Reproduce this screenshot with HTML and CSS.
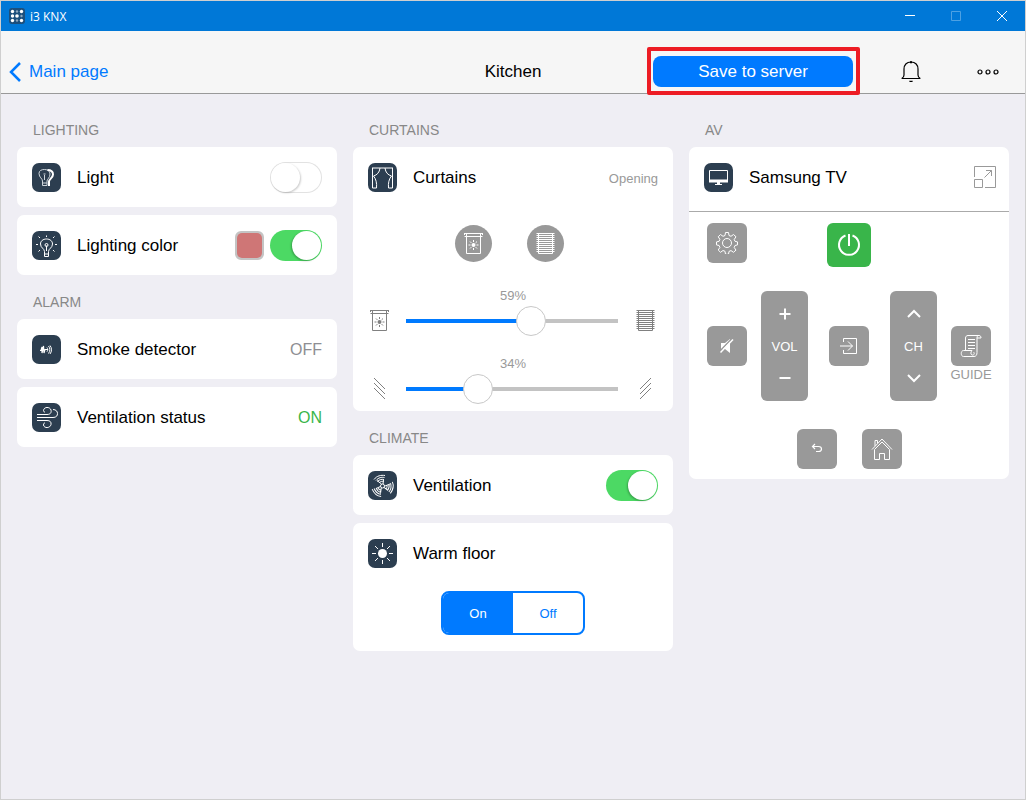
FILE: index.html
```html
<!DOCTYPE html>
<html lang="en">

<head>
    <meta charset="UTF-8">
    <meta name="viewport" content="width=device-width, initial-scale=1.0">
    <title>i3 KNX</title>
    <link rel="stylesheet" href="styles.css">
</head>

<body>
    <!-- shared icons -->
    <svg class="sprite" aria-hidden="true">
        <symbol id="icon-screen" viewBox="0 0 19 21">
            <path d="M.5.500h18M.5 3.500h18M2.500 0v20.500h14V0M.5 0v2M18.500 0v2" />
            <circle cx="9.500" cy="12" r="2" fill="currentColor" stroke="none" />
            <path d="M9.500 7v2M9.500 15v2M4.500 12h2M12.500 12h2M6 8.500l1.400 1.400M11.600 14.100l1.400 1.400M13 8.500l-1.400 1.400M7.400 14.100L6 15.500" />
        </symbol>
        <symbol id="icon-blinds" viewBox="0 0 19 21">
            <path d="M.5.500h18M2.500 0v20.500h14V0M.5 2.500h18M.5 4.500h18M.5 6.500h18M.5 8.500h18M.5 10.500h18M.5 12.500h18M.5 14.500h18M.5 16.500h18M.5 18.500h18" />
        </symbol>
    </svg>

    <div id="titlebar">
        <svg class="app-icon" viewBox="0 0 16 16">
            <rect width="16" height="16" rx="3" fill="#1c4f7c" />
            <g fill="#fff">
                <circle cx="3.500" cy="3.500" r="1.700" />
                <circle cx="8" cy="3.500" r="1.200" opacity="0.5" />
                <circle cx="12.500" cy="3.500" r="1.700" />
                <circle cx="3.500" cy="8" r="1.700" />
                <circle cx="8" cy="8" r="1.800" />
                <circle cx="12.500" cy="8" r="1.200" opacity="0.5" />
                <circle cx="3.500" cy="12.500" r="1.700" />
                <circle cx="8" cy="12.500" r="1.200" opacity="0.5" />
                <circle cx="12.500" cy="12.500" r="1.700" />
            </g>
        </svg>
        <span class="app-name">i3 KNX</span>
        <button aria-label="Minimize"><svg viewBox="0 0 10 10"><path d="M0 4.500h10" /></svg></button>
        <button aria-label="Maximize" disabled><svg viewBox="0 0 10 10"><path d="M.5.500h9v9h-9z" /></svg></button>
        <button aria-label="Close"><svg viewBox="0 0 10 10"><path d="M0 0l10 10M10 0L0 10" /></svg></button>
    </div>

    <header>
        <a class="back" href="#">
            <svg viewBox="0 0 12 20"><path d="M11 1L2 10l9 9" /></svg>
            Main page
        </a>
        <h1>Kitchen</h1>
        <div class="actions">
            <button class="save">Save to server</button>
            <button class="header-button" aria-label="Notifications">
                <svg viewBox="0 0 20 22"><path d="M10 1C5.500 1 3 4 3 8v6c0 2-1.200 3-2.300 3.500h18.600C18.200 17 17 16 17 14V8c0-4-2.500-7-7-7zM8.500 19.800c.8.900 2.200.900 3 0" /><path d="M9 1.200h2" stroke-width="2" /></svg>
            </button>
            <button class="header-button" aria-label="More">
                <svg viewBox="0 0 22 6"><circle cx="3" cy="3" r="2" /><circle cx="11" cy="3" r="2" /><circle cx="19" cy="3" r="2" /></svg>
            </button>
        </div>
    </header>

    <main>
        <div class="column">
            <h2>Lighting</h2>
            <div class="card">
                <div class="row">
                    <svg class="icon" viewBox="0 0 29 29"><path d="M10.500 18c0-2.500-3.500-3.500-3.500-7.500 0-3 2.500-4 5.500-4s5.500 1.500 5.500 4.500c0 4-3 5-3 7v4.500h-4.500zM10.500 20h4.500M12.500 17v-5M11.500 11h2" stroke="#cfd6dc" /><path d="M15.500 7c4 0 5.500 2 5.500 4.500 0 3.500-4 4.500-4 7V23" stroke-width="2" /></svg>
                    <label for="light">Light</label>
                    <input type="checkbox" class="toggle" id="light">
                </div>
            </div>
            <div class="card">
                <div class="row">
                    <svg class="icon" viewBox="0 0 29 29"><path d="M12.500 20.500c0-3-4-3.500-4-7.500 0-3 2.500-5 6-5s6 2 6 5c0 4-4 4.500-4 7.500v5h-4zM12.500 23h4M14.500 20v-5.500" /><circle cx="14.500" cy="14" r="1.500" /><path d="M14.500 6V4.500M8 7L6.500 5.500M21 7l1.500-1.500M6 13.500H4M23 13.500h2M8 19l-1.500 1.500M21 19l1.500 1.500" /></svg>
                    <label for="lighting-color">Lighting color</label>
                    <input type="color" value="#cf7676" aria-label="Color">
                    <input type="checkbox" class="toggle" id="lighting-color" checked>
                </div>
            </div>

            <h2>Alarm</h2>
            <div class="card">
                <div class="row">
                    <svg class="icon" viewBox="0 0 29 29"><path d="M8 15.500h1l1-3.500v6l1.500-7 .5 7 1-3.500h3" stroke-width="1.200" /><path d="M15 12.500c1 1.200 1 3 0 4.200M16.500 11c1.800 2 1.800 5 0 7.500M18 10.500c2 2.500 2 6 0 8.500" /></svg>
                    <span class="name">Smoke detector</span>
                    <span class="status">OFF</span>
                </div>
            </div>
            <div class="card">
                <div class="row">
                    <svg class="icon" viewBox="0 0 29 29"><path d="M5 11.500h10c4 0 4.500-2.500 4-4.500-1.200-3.500-7-3.500-7.500.5 0 1 .5 1.500 1.500 1.500M5 14.500h16c3.500 0 4.500-2 4.500-4s-1.500-4-4.500-4M5 17.500h10c3 0 4.500 1.500 4 4-.8 4-7 4-7.500.5 0-1.500.5-2 1.500-2" /></svg>
                    <span class="name">Ventilation status</span>
                    <span class="status on">ON</span>
                </div>
            </div>
        </div>

        <div class="column">
            <h2>Curtains</h2>
            <div class="card">
                <div class="row">
                    <svg class="icon" viewBox="0 0 29 29"><path d="M4 5h21M4.500 5v20h4c.5-5-.5-9-3-12 3.500-1 6-3.500 6.500-8M24.500 5v20h-4c-.5-5 .5-9 3-12-3.500-1-6-3.500-6.500-8" /></svg>
                    <span class="name">Curtains</span>
                    <span class="status small">Opening</span>
                </div>
                <div class="curtain-buttons">
                    <button aria-label="Open"><svg class="curtain-icon"><use href="#icon-screen" /></svg></button>
                    <button aria-label="Close"><svg class="curtain-icon"><use href="#icon-blinds" /></svg></button>
                </div>
                <div class="slider">
                    <output for="position">59%</output>
                    <svg class="curtain-icon"><use href="#icon-screen" /></svg>
                    <input type="range" id="position" aria-label="Position" value="59" style="--value: 59">
                    <svg class="curtain-icon"><use href="#icon-blinds" /></svg>
                </div>
                <div class="slider">
                    <output for="tilt">34%</output>
                    <svg class="curtain-icon" viewBox="0 0 19 21"><path d="M4 0l11 11M4 5l11 11M4 10l11 11" /></svg>
                    <input type="range" id="tilt" aria-label="Tilt" value="34" style="--value: 34">
                    <svg class="curtain-icon" viewBox="0 0 19 21"><path d="M15 0L4 11M15 5L4 16M15 10L4 21" /></svg>
                </div>
            </div>

            <h2>Climate</h2>
            <div class="card">
                <div class="row">
                    <svg class="icon" viewBox="0 0 29 29">
                        <circle cx="14.500" cy="15" r="2" />
                        <g id="blade"><path d="M13.500 13L9 9.500M15 13l.5-4M6 8.500C9 4.500 13 4 17 4.500M8 9.500c2.500-3 5.500-3.500 8.500-3M9.500 10.500c2-2 4-2.500 6.500-2M11.500 11.500c1-1 2.500-1.500 4-1" /></g>
                        <use href="#blade" transform="rotate(120 14.500 15)" />
                        <use href="#blade" transform="rotate(240 14.500 15)" />
                    </svg>
                    <label for="ventilation">Ventilation</label>
                    <input type="checkbox" class="toggle" id="ventilation" checked>
                </div>
            </div>
            <div class="card">
                <div class="row">
                    <svg class="icon" viewBox="0 0 29 29"><circle cx="14.500" cy="14.500" r="4.500" fill="#fff" stroke="none" /><path d="M14.500 4v4M14.500 21v4M4 14.500h4M21 14.500h4M7 7l3 3M19 19l3 3M22 7l-3 3M10 19l-3 3" /></svg>
                    <span class="name">Warm floor</span>
                </div>
                <div class="segmented">
                    <input type="radio" name="floor" id="floor-on" checked>
                    <label for="floor-on">On</label>
                    <input type="radio" name="floor" id="floor-off">
                    <label for="floor-off">Off</label>
                </div>
            </div>
        </div>

        <div class="column">
            <h2>AV</h2>
            <div class="card">
                <div class="row divided">
                    <svg class="icon" viewBox="0 0 29 29"><path d="M5.500 7.500h18v11h-18z" /><path d="M5 16.500h19v3H5zM13 19h3v2h2v1h-7v-1h2z" fill="#fff" stroke="none" /></svg>
                    <span class="name">Samsung TV</span>
                    <button class="expand" aria-label="Expand">
                        <svg viewBox="0 0 22 22"><path d="M.5 11V.5h21v21H11M.5 13.500h8v8h-8zM10.500 11.500l7-7M12 4.500h5.500V10" /></svg>
                    </button>
                </div>
                <div class="remote">
                    <div class="remote-top">
                        <button class="key" aria-label="Settings">
                            <svg viewBox="0 0 22 22"><circle cx="11" cy="11" r="4.500" /><path d="M9.500.500h3l.5 3 2 .8 2.500-1.800 2.500 2.300-1.800 2.700.8 1.800 2.500.6v3l-2.500.6-.8 2 1.800 2.600-2.500 2.200-2.500-1.700-2 .8-.5 2.900h-3l-.5-3-2-.8-2.500 1.800-2.300-2.300 1.700-2.500-.8-2-2.600-.6v-3l2.600-.6.8-2-1.700-2.500L4.500 2.500 7 4.300l2-.8z" /></svg>
                        </button>
                        <button class="key power" aria-label="Power">
                            <svg viewBox="0 0 22 22"><path d="M7.500 1.500a10 10 0 1 0 7 0M11 0v12" /></svg>
                        </button>
                    </div>
                    <div class="remote-middle">
                        <div class="group">
                            <button class="key" aria-label="Mute">
                                <svg viewBox="0 0 22 22"><path d="M5 8h4l5-4v14l-5-4H5z" fill="#fff" stroke="none" /><path d="M16 3.500L3.500 16.500" stroke="#999" stroke-width="1.500" /><path d="M17 4.500L4.500 17.500" stroke-width="1.500" /></svg>
                            </button>
                            <div class="rocker">
                                <button aria-label="Volume up"><svg viewBox="0 0 14 14"><path d="M7 1.500v11M1.500 7h11" /></svg></button>
                                <span>VOL</span>
                                <button aria-label="Volume down"><svg viewBox="0 0 14 14"><path d="M1.500 7h11" /></svg></button>
                            </div>
                        </div>
                        <button class="key" aria-label="Source">
                            <svg viewBox="0 0 22 22"><path d="M5.500 7V3.500h13v15h-13V15M2 11h12.500M10 6.500l4.500 4.500-4.500 4.500" /></svg>
                        </button>
                        <div class="group">
                            <div class="rocker">
                                <button aria-label="Channel up"><svg viewBox="0 0 14 14"><path d="M1 10l6-6 6 6" /></svg></button>
                                <span>CH</span>
                                <button aria-label="Channel down"><svg viewBox="0 0 14 14"><path d="M1 4l6 6 6-6" /></svg></button>
                            </div>
                            <div class="captioned">
                                <button class="key" id="guide" aria-labelledby="guide-label">
                                    <svg viewBox="0 0 22 22"><path d="M5.500 15.500V3c0-1.500 1-2.500 2.500-2.500h11c1.500 0 2 1 2 2.500h-4M17 3c0-1.500.5-2.500 1.500-2.500M17 3v14.500c0 2.500-1 4-3 4H3.500c-3 0-3-6 0-6H12c-1.500 1.500-1.500 4 0 4.500 2 .5 3-1.500 1.500-3M8 4.500h7M8 7.500h7M8 10.500h7M8 13.500h7" /></svg>
                                </button>
                                <label id="guide-label" for="guide">GUIDE</label>
                            </div>
                        </div>
                    </div>
                    <div class="remote-bottom">
                        <button class="key" aria-label="Back">
                            <svg viewBox="0 0 22 22"><path d="M9 6L6.500 8.500 9 11M7 8.500h5.500c4 0 4 5 0 5H10" stroke-width="1.200" /></svg>
                        </button>
                        <button class="key" aria-label="Home">
                            <svg viewBox="0 0 22 22"><path d="M1 11.500L11 1l10 10.500M3.500 11.500L11 4l7.500 7.500v10h-5v-6h-5v6h-5zM4 8V2.500h2.500V5" /></svg>
                        </button>
                    </div>
                </div>
            </div>
        </div>
    </main>

    <script>
        document.querySelectorAll('.slider input').forEach(input => {
            input.addEventListener('input', () => {
                input.style.setProperty('--value', input.value);
                input.parentElement.querySelector('output').textContent = input.value + '%';
            });
        });
    </script>
</body>

</html>
```
FILE: styles.css
```css
* {
    box-sizing: border-box;
}

body {
    font-family: "Liberation Sans", Arial, sans-serif;
    font-size: 17px;
    background-color: #efeef4;
    color: #000;
    margin: 0;
    min-height: 100vh;
    border: 1px solid #cfcfcf;
}

button {
    font: inherit;
    color: inherit;
    background: none;
    border: none;
    padding: 0;
    cursor: pointer;
    display: flex;
    align-items: center;
    justify-content: center;
}

svg {
    display: block;
    flex: none;
    fill: none;
    stroke: currentColor;
}

.sprite {
    display: none;
}

#titlebar {
    display: flex;
    align-items: center;
    height: 30px;
    padding-left: 8px;
    background-color: #0078d7;
    color: #fff;
}

.app-icon {
    width: 16px;
    height: 16px;
    stroke: none;
}

.app-name {
    flex-grow: 1;
    padding-left: 5px;
    font-family: "Open Sans", "Noto Sans", sans-serif;
    font-size: 12px;
}

#titlebar button {
    width: 46px;
    height: 30px;
}

#titlebar button svg {
    width: 10px;
    height: 10px;
}

#titlebar button:disabled {
    opacity: 0.3;
}

header {
    display: grid;
    grid-template-columns: 1fr auto 1fr;
    align-items: center;
    height: 63px;
    padding: 18px 18px 0;
    background-color: #f6f6f6;
    border-bottom: 1px solid #999;
}

.back {
    display: flex;
    align-items: center;
    gap: 8px;
    margin-left: -10px;
    padding-top: 2px;
    color: #007aff;
    text-decoration: none;
}

.back svg {
    width: 12px;
    height: 20px;
    stroke-width: 2.5;
}

h1 {
    font-size: 17px;
    font-weight: normal;
    margin: 0;
    padding-top: 2px;
}

.actions {
    display: flex;
    align-items: center;
    justify-content: flex-end;
    gap: 39px;
}

.save {
    position: relative;
    width: 200px;
    height: 31px;
    padding-top: 2px;
    border-radius: 8px;
    background-color: #007aff;
    color: #fff;
}

/* red frame around the button */
.save::after {
    content: '';
    position: absolute;
    inset: -9px -7px -8px -6px;
    border: 4px solid #ed1c24;
    border-radius: 2px;
}

.header-button {
    width: 38px;
    height: 38px;
    padding-top: 2px;
}

.header-button svg {
    width: 22px;
    height: 22px;
    stroke-width: 1.2;
}

main {
    display: grid;
    grid-template-columns: repeat(3, 1fr);
    gap: 16px;
    align-items: start;
    padding: 9px 16px 16px;
}

h2 {
    font-size: 14px;
    font-weight: normal;
    line-height: 34px;
    text-transform: uppercase;
    color: #888;
    margin: 0;
    padding: 10px 16px 0;
}

.card {
    background-color: #fff;
    border-radius: 7px;
}

.card + .card {
    margin-top: 8px;
}

.row {
    display: flex;
    align-items: center;
    height: 60px;
    padding: 0 15px;
}

.row.divided {
    height: 65px;
    padding: 0 13px 4px 15px;
    border-bottom: 1px solid #aaa;
}

.row label,
.row .name {
    flex-grow: 1;
    padding: 2px 0 0 16px;
}

.icon {
    width: 29px;
    height: 29px;
    border-radius: 7px;
    background-color: #2c3e50;
    color: #fff;
}

.status {
    padding-top: 2px;
    font-size: 16px;
    color: #8e8e93;
}

.status.on {
    color: #39b54a;
}

.status.small {
    font-size: 13px;
    color: #999;
}

.toggle {
    appearance: none;
    width: 52px;
    height: 31px;
    margin: 0;
    padding: 1px;
    border-radius: 16px;
    background-color: #fff;
    box-shadow: inset 0 0 0 1px #e2e2e2;
    cursor: pointer;
}

.toggle::before {
    content: '';
    display: block;
    width: 29px;
    height: 29px;
    border-radius: 50%;
    background-color: #fff;
    box-shadow: 1px 1px 2px rgba(0, 0, 0, 0.2);
}

.toggle:checked {
    background-color: #4cd964;
    box-shadow: none;
}

.toggle:checked::before {
    margin-left: auto;
    box-shadow: -1px 1px 2px rgba(0, 0, 0, 0.25);
}

input[type="color"] {
    appearance: none;
    width: 29px;
    height: 29px;
    margin: 0 6px 0 0;
    padding: 0;
    border: 2px solid #c4c4c4;
    border-radius: 6px;
    background: #c4c4c4;
    overflow: hidden;
    cursor: pointer;
}

input[type="color"]::-webkit-color-swatch-wrapper {
    padding: 0;
}

input[type="color"]::-webkit-color-swatch {
    border: none;
    border-radius: 5px;
}

.curtain-icon {
    width: 19px;
    height: 21px;
}

.curtain-buttons {
    display: flex;
    justify-content: center;
    gap: 35px;
    padding: 18px 7px 26px 0;
}

.curtain-buttons button {
    width: 37px;
    height: 37px;
    border-radius: 50%;
    background-color: #999;
    color: #fff;
}

.slider {
    display: grid;
    grid-template-columns: 53px 1fr 55px;
    row-gap: 2px;
    align-items: center;
    justify-items: center;
    padding-bottom: 21px;
    color: #808080;
}

.slider:last-child {
    padding-bottom: 8px;
}

.slider output {
    grid-column: 1 / -1;
    font-size: 13px;
    line-height: 16px;
    color: #999;
}

/* the input is one knob wider than the line, so the knob centre can reach both ends */
.slider input {
    appearance: none;
    justify-self: stretch;
    height: 29px;
    margin: 0 -15px;
    background: none;
}

.slider input::-webkit-slider-runnable-track {
    height: 4px;
    margin: 0 15px;
    background: linear-gradient(to right, #007aff calc(var(--value) * 1%), #c3c3c3 0);
}

.slider input::-webkit-slider-thumb {
    appearance: none;
    position: relative;
    left: calc((var(--value) - 50) * 0.3px);
    width: 30px;
    height: 30px;
    margin-top: -13px;
    border: 1px solid #c8c8c8;
    border-radius: 50%;
    background-color: #fff;
}

.segmented {
    display: flex;
    width: 144px;
    height: 44px;
    margin: 8px auto 0;
    border: 2px solid #007aff;
    border-radius: 8px;
    overflow: hidden;
    font-size: 13px;
    color: #007aff;
}

.card:has(.segmented) {
    padding-bottom: 16px;
}

.segmented input {
    appearance: none;
    margin: 0;
}

.segmented label {
    flex: 1;
    display: flex;
    align-items: center;
    justify-content: center;
    cursor: pointer;
}

.segmented input:checked + label {
    background-color: #007aff;
    color: #fff;
}

.expand svg {
    width: 22px;
    height: 22px;
    color: #999;
}

.remote {
    padding: 11px 18px 10px;
    font-size: 13px;
    color: #fff;
}

.key {
    width: 40px;
    height: 40px;
    border-radius: 6px;
    background-color: #999;
}

.key svg {
    width: 22px;
    height: 22px;
}

.remote-top {
    display: grid;
    grid-template-columns: 1fr auto 1fr;
    align-items: start;
}

.power {
    width: 44px;
    height: 44px;
    background-color: #39b54a;
}

.power svg {
    stroke-width: 2;
    overflow: visible;
}

.remote-middle {
    display: flex;
    align-items: center;
    justify-content: space-between;
    margin: 24px 0 28px;
}

.group {
    display: flex;
    align-items: center;
    gap: 14px;
}

.rocker {
    display: grid;
    grid-template-rows: 46px 18px 46px;
    width: 47px;
    border-radius: 6px;
    background-color: #999;
    line-height: 20px;
    text-align: center;
}

.rocker svg {
    width: 14px;
    height: 14px;
    stroke-width: 2;
}

.captioned {
    display: flex;
    flex-direction: column;
    align-items: center;
    width: 40px;
    padding-top: 18px;
    line-height: 18px;
    color: #999;
}

.captioned .key {
    color: #fff;
}

.remote-bottom {
    display: flex;
    justify-content: center;
    gap: 25px;
}
```
